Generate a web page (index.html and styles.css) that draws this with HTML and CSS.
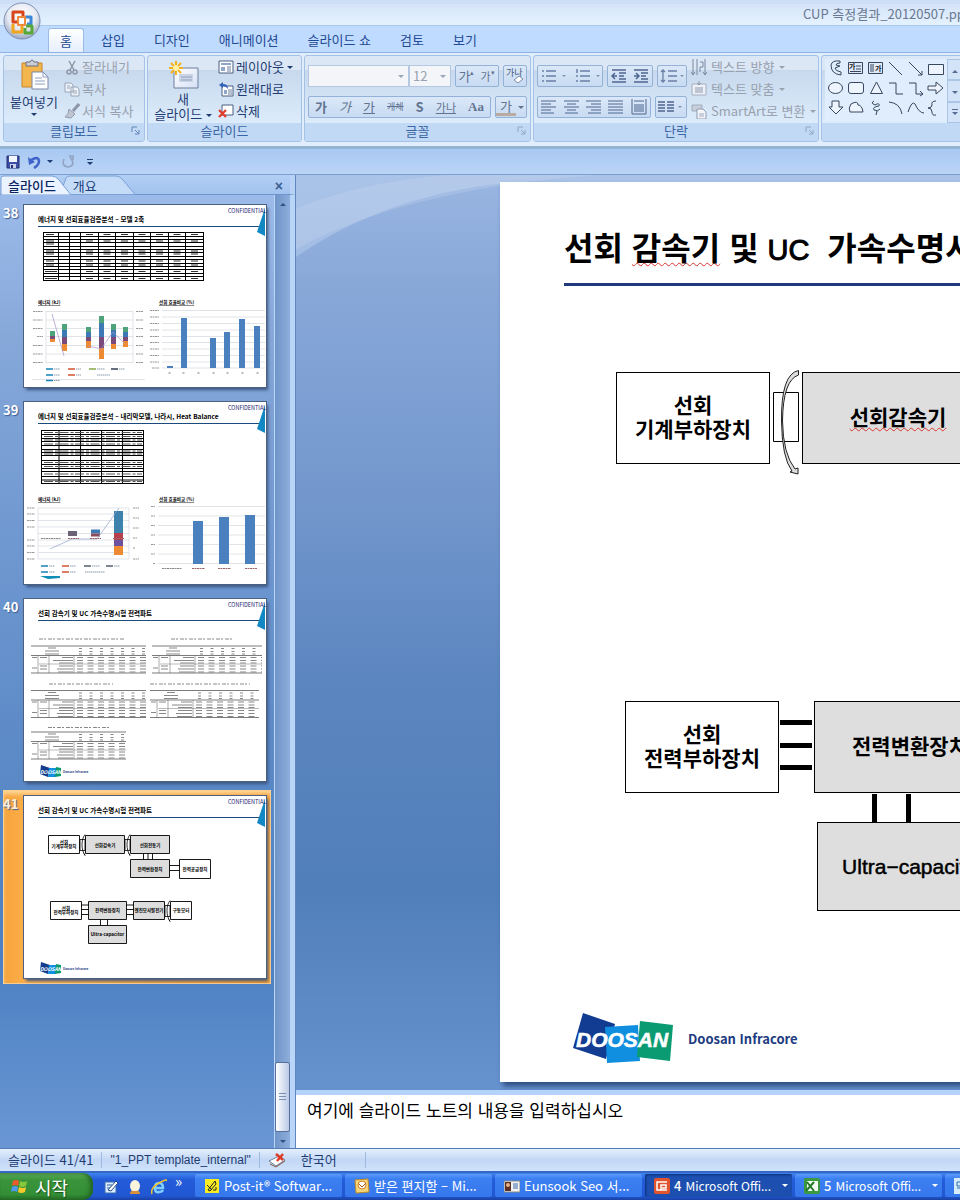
FILE: index.html
```html
<!DOCTYPE html>
<html lang="ko">
<head>
<meta charset="utf-8">
<title>CUP 측정결과_20120507.ppt</title>
<link rel="stylesheet" href="styles.css">
</head>
<body>
<svg class="defs" aria-hidden="true">
  <defs>
    <g id="slide-frame">
      <path d="M14 21.5H236" stroke="#1d4a7d" stroke-width="1.2"/>
      <path d="M241 3V31L233 27Z" fill="#1187c4"/>
      <text x="204" y="7.5" font-size="5.5" fill="#1c2470">CONFIDENTIAL</text>
    </g>
    <g id="mini-logo">
      <path d="M17 166l9 3-2 9-8-3z" fill="#143c8c"/><path d="M25 169h7v9h-8z" fill="#0f8fe0"/><path d="M32 168l5 1v8l-6 1z" fill="#0b9a6c"/>
      <text x="16" y="175" font-size="5" font-weight="700" font-style="italic" fill="#fff">DOOSAN</text>
      <text x="39" y="174" font-size="3" font-weight="700" fill="#1c3f83">Doosan Infracore</text>
    </g>
    <g id="data-table">
      <path d="M0 0H115M0 9.500H115M0 27H115" stroke="#444" stroke-width=".7"/>
      <path d="M7 9.500V27M18 9.500V27M43 9.500V27" stroke="#555" stroke-width=".5"/>
      <path d="M8 18H115" stroke="#777" stroke-width=".5"/>
      <g stroke="#888" stroke-width="1" fill="none">
        <path d="M17 2h8M14 5h14M14 8h14M1 11.500h5M9 11.500h7M1 22h5M9 20h7M9 23h7"/>
        <path d="M31 11.500h11M22 14.500h20M28 17h14M28 20h14M26 23h16M27 26h15"/>
        <path stroke-dasharray="6 4.500" d="M46 11.500h69M46 14.500h69M46 17h69M46 20h69M46 23h69M46 26h69"/>
        <path stroke-dasharray="3 7.500" d="M48 2.500h66M48 5.500h66M48 8h66"/>
      </g>
    </g>
    <g id="coupling"><path d="M0 4h5v11h-5zM5 -1C1 4 1 14 5 20M4 18l1 2" fill="none" stroke="#000" stroke-width=".8"/></g>
    <linearGradient id="paper" x1="0" y1="0" x2="1" y2="1"><stop offset="0" stop-color="#fff"/><stop offset="1" stop-color="#d5e0f4"/></linearGradient>
    <radialGradient id="orb" cx=".5" cy=".35" r=".65"><stop offset="0" stop-color="#fff"/><stop offset=".6" stop-color="#e6eaf2"/><stop offset="1" stop-color="#9aa8c4"/></radialGradient>
  </defs>
</svg>

<header class="titlebar">
  <h1 class="doc-title">CUP 측정결과_20120507.ppt</h1>
</header>

<nav class="tabs">
  <button class="office" aria-label="Office 단추">
    <svg viewBox="0 0 38 38">
      <circle cx="19" cy="19" r="18" fill="url(#orb)" stroke="#7d8fb3"/>
      <g fill="none" stroke-width="3" stroke-linejoin="round">
        <path d="M14 20H10V10h10v4" stroke="#d9451b"/>
        <path d="M22 15h6v7h-4" stroke="#3c86d8"/>
        <path d="M10 22v8h9v-6" stroke="#f0a51c"/>
        <path d="M23 24h6v7h-7v-5" stroke="#56a838"/>
        <path d="M15 15h7v8h-7z" stroke="#f08a3a" stroke-width="2"/>
      </g>
      <path d="M17 17h4v4h-4z" fill="#fff"/>
    </svg>
  </button>
  <button class="tab active">홈</button>
  <button class="tab">삽입</button>
  <button class="tab">디자인</button>
  <button class="tab">애니메이션</button>
  <button class="tab">슬라이드 쇼</button>
  <button class="tab">검토</button>
  <button class="tab">보기</button>
</nav>

<section class="ribbon">
  <div class="group g-clip">
    <div class="group-body">
      <button class="big">
        <svg width="32" height="32" viewBox="0 0 32 32"><path d="M4 4h20v24H4z" fill="#f3b64c" stroke="#c8862a"/><path d="M8 7V3h4q2-4 4 0h4v4z" fill="#c9cdd6" stroke="#6c6f7c"/><path d="M14 13h11l5 5v12H14z" fill="#fff" stroke="#7a87a8"/><path d="M25 13v5h5M17 19h7M17 22h10M17 25h10" fill="none" stroke="#8e9fc4"/></svg>
        <span>붙여넣기</span><i class="caret"></i>
      </button>
      <div class="stack">
        <button class="cmd off"><svg width="16" height="16" viewBox="0 0 16 16"><path d="M5 2l5 9M11 2L6 11" stroke="#8d97a8" stroke-width="1.500"/><circle cx="5" cy="13" r="2" fill="none" stroke="#8d97a8" stroke-width="1.500"/><circle cx="11" cy="13" r="2" fill="none" stroke="#8d97a8" stroke-width="1.500"/></svg>잘라내기</button>
        <button class="cmd off"><svg width="16" height="16" viewBox="0 0 16 16"><path d="M1 2h6l2 2v7H1zM7 6h6l2 2v7H7z" fill="#eef2f9" stroke="#9aa5b8"/><path d="M3 5h3M3 7h3M9 10h4M9 12h4" stroke="#9aa5b8"/></svg>복사</button>
        <button class="cmd off"><svg width="16" height="16" viewBox="0 0 16 16"><path d="M15 1L9 8" stroke="#8d97a8" stroke-width="3"/><path d="M5 6l6 5-4 4-6-1q4-3 4-8z" fill="#bfc6d2" stroke="#929cad"/></svg>서식 복사</button>
      </div>
    </div>
    <footer>클립보드<svg class="launch" viewBox="0 0 9 9"><path d="M1 6V1h5M4 4l4 4M8 4v4H4" fill="none" stroke="#6387b8"/></svg></footer>
  </div>

  <div class="group g-slide">
    <div class="group-body">
      <button class="big">
        <svg width="32" height="32" viewBox="0 0 32 32"><path d="M7 9h24v20H7z" fill="url(#paper)" stroke="#6e7f9d"/><path d="M12 15h14v8H12z" fill="#c9d4e6"/><path d="M14 18h11M14 21h11" stroke="#93a3bf"/><path d="M9 2v14M2 9h14M4 4l10 10M14 4L4 14" stroke="#f2b21b" stroke-width="2"/><circle cx="9" cy="9" r="3" fill="#fff2a8"/></svg>
        <span class="line">새</span>
        <span class="line">슬라이드 <i class="caret"></i></span>
      </button>
      <div class="stack">
        <button class="cmd"><svg width="16" height="16" viewBox="0 0 16 16"><path d="M1 2h14v12H1z" fill="#fff" stroke="#4d5f80"/><path d="M3 4h10v2H3zM3 8h4v4H3z" fill="#8fa5c9"/><path d="M9 8h4M9 10h4M9 12h4" stroke="#6c7f9f"/></svg>레이아웃 <i class="caret"></i></button>
        <button class="cmd"><svg width="16" height="16" viewBox="0 0 16 16"><path d="M4 5h11v10H4z" fill="#fff" stroke="#4d5f80"/><path d="M6 9h3v4H6z" fill="#8fa5c9"/><path d="M10 9h4M10 11h4M10 13h4" stroke="#6c7f9f"/><path d="M1 4l4-3v2q5 0 5 5Q8 5 5 5v2z" fill="#2f62b8"/></svg>원래대로</button>
        <button class="cmd"><svg width="16" height="16" viewBox="0 0 16 16"><path d="M4 2h11v10H4z" fill="#fff" stroke="#4d5f80"/><path d="M1 7l7 7M8 7l-7 7" stroke="#e23b2a" stroke-width="2.200"/></svg>삭제</button>
      </div>
    </div>
    <footer>슬라이드</footer>
  </div>

  <div class="group g-font">
    <div class="group-body rows">
      <div class="row">
        <div class="combos">
          <label class="combo wide"><select aria-label="글꼴"><option></option></select></label>
          <label class="combo"><select aria-label="글꼴 크기"><option>12</option></select></label>
        </div>
        <div class="btns grow"><button>가<sup>▴</sup></button><button class="small">가<sup>▾</sup></button></div>
        <div class="btns"><button aria-label="서식 지우기"><svg width="18" height="18" viewBox="0 0 18 18"><text x="0" y="9" font-size="9" fill="#44597f">가나</text><path d="M8 13l5-4 4 3-5 4z" fill="#fff" stroke="#7b8db0"/></svg></button></div>
      </div>
      <div class="row">
        <div class="btns fill"><button><b>가</b></button><button><i>가</i></button><button><u>가</u></button><button class="tiny"><s>개체</s></button><button><b>S</b></button><button class="small"><u>가나</u></button><button class="serif">Aa</button></div>
        <div class="btns"><button class="fontcolor">가</button><button aria-label="글꼴 색 목록"><i class="caret"></i></button></div>
      </div>
    </div>
    <footer>글꼴<svg class="launch" viewBox="0 0 9 9"><path d="M1 6V1h5M4 4l4 4M8 4v4H4" fill="none" stroke="#8ea6c8"/></svg></footer>
  </div>

  <div class="group g-para">
    <div class="group-body">
      <div class="rows">
        <div class="row">
          <div class="btns wide-btns"><button aria-label="글머리 기호"><svg width="28" height="16" viewBox="0 0 28 16"><path d="M2 3h2M2 8h2M2 13h2M6 3h10M6 8h10M6 13h10" stroke="#6a7fa5" stroke-width="1.500"/><path d="M22 7h4l-2 2z" fill="#7e90b0"/></svg></button><button aria-label="번호 매기기"><svg width="28" height="16" viewBox="0 0 28 16"><path d="M5 1v4M4 8h2M4 13h2M8 3h10M8 8h10M8 13h10" stroke="#6a7fa5" stroke-width="1.500"/><path d="M24 7h4l-2 2z" fill="#7e90b0"/></svg></button></div>
          <div class="btns"><button aria-label="내어쓰기"><svg width="18" height="16" viewBox="0 0 16 16"><path d="M1 2h14M8 5h7M8 8h5M8 11h7M1 14h14M6 8H1M4 5L1 8l3 3" fill="none" stroke="#4f668f" stroke-width="1.500"/></svg></button><button aria-label="들여쓰기"><svg width="18" height="16" viewBox="0 0 16 16"><path d="M1 2h14M8 5h7M8 8h5M8 11h7M1 14h14M1 8h5M3 5l3 3-3 3" fill="none" stroke="#4f668f" stroke-width="1.500"/></svg></button></div>
          <div class="btns"><button aria-label="줄 간격"><svg width="24" height="16" viewBox="0 0 24 16"><path d="M3 2v12M1 4l2-2 2 2M1 12l2 2 2-2M8 3h9M8 8h9M8 13h9" fill="none" stroke="#6a7fa5" stroke-width="1.300"/><path d="M20 7h4l-2 2z" fill="#7e90b0"/></svg></button></div>
        </div>
        <div class="row">
          <div class="btns fill"><button aria-label="왼쪽 맞춤"><svg width="16" height="14" viewBox="0 0 16 14"><path d="M0 1h15M0 4h10M0 7h15M0 10h10M0 13h13" stroke="#4f668f"/></svg></button><button aria-label="가운데 맞춤"><svg width="16" height="14" viewBox="0 0 16 14"><path d="M0 1h15M3 4h9M0 7h15M3 10h9M1 13h13" stroke="#4f668f"/></svg></button><button aria-label="오른쪽 맞춤"><svg width="16" height="14" viewBox="0 0 16 14"><path d="M0 1h15M5 4h10M0 7h15M5 10h10M2 13h13" stroke="#4f668f"/></svg></button><button aria-label="양쪽 맞춤"><svg width="16" height="14" viewBox="0 0 16 14"><path d="M0 1h15M0 4h15M0 7h15M0 10h15M0 13h15" stroke="#4f668f"/></svg></button><button aria-label="균등 분할"><svg width="16" height="16" viewBox="0 0 16 16"><path d="M1 0v15h14V0M3 2h10M3 6h10M3 8h10M3 10h10M3 12h10" fill="none" stroke="#4f668f"/></svg></button></div>
          <div class="btns"><button aria-label="열"><svg width="26" height="14" viewBox="0 0 26 14"><path d="M0 2h7M0 5h7M0 8h7M0 11h7M9 2h7M9 5h7M9 8h7M9 11h7" stroke="#4f668f" stroke-width="1.500"/><path d="M20 6h4l-2 2z" fill="#7e90b0"/></svg></button></div>
        </div>
      </div>
      <div class="stack">
        <button class="cmd off"><svg width="16" height="16" viewBox="0 0 16 16"><path d="M2 0v16M6 0v16M14 0v16M0 13l2 3 2-3M12 13l2 3 2-3M9 3h3v5h-3M9 8v5" fill="none" stroke="#7988a3"/></svg>텍스트 방향 <i class="caret"></i></button>
        <button class="cmd off"><svg width="16" height="16" viewBox="0 0 16 16"><path d="M1 3h14v11H1z" fill="#edf1f7" stroke="#a3aebf"/><path d="M8 0v4M6 2l2 2 2-2M4 7h8M4 9h8M4 11h8" stroke="#8d99ad" fill="none"/></svg>텍스트 맞춤 <i class="caret"></i></button>
        <button class="cmd off"><svg width="16" height="16" viewBox="0 0 16 16"><path d="M1 2h10v6H1z" fill="#c8cfdb" stroke="#a0abbd"/><path d="M6 6h6l3 3v7H6z" fill="#f3f5f9" stroke="#8f9bb0"/><path d="M8 11h5M8 13h5" stroke="#a0abbd"/></svg>SmartArt로 변환 <i class="caret"></i></button>
      </div>
    </div>
    <footer>단락<svg class="launch" viewBox="0 0 9 9"><path d="M1 6V1h5M4 4l4 4M8 4v4H4" fill="none" stroke="#8ea6c8"/></svg></footer>
  </div>

  <div class="group g-draw">
    <div class="group-body">
      <div class="gallery">
        <svg width="122" height="62" viewBox="0 0 122 62" fill="none" stroke="#38465f">
          <path d="M15 2Q7 1 6 6q0 9 10 10v-3q-6-1-6-4l5-2-4-1q0-2 4-2z"/>
          <path d="M23.500 3.500h14v11h-14zM43.500 3.500h14v11h-14z" fill="#dfe9f8"/><path d="M31 7h5M31 10h5M25 12.500h11M46 5v8M48 5v8"/>
          <text x="24" y="10" font-size="7" font-weight="700" fill="#222" stroke="none">가</text><text x="50" y="12" font-size="7" font-weight="700" fill="#222" stroke="none">가</text>
          <path d="M64 3l13 13M84 3l13 13M97 12v4h-4"/><path d="M103.500 5.500h15v10h-15z" fill="#eef4fd"/>
          <ellipse cx="10.500" cy="29" rx="7" ry="5.500" fill="#eef4fd"/><rect x="23.500" y="23.500" width="15" height="11" rx="2.500" fill="#eef4fd"/><path d="M51.500 23l6 11.500h-12z" fill="#eef4fd"/>
          <path d="M64 24h7v11h7M84 24h7v11h7M95 32l3 3-3 2"/><path d="M103 27h8v-4l7 6-7 6v-4h-8z" fill="#eef4fd"/>
          <path d="M7 42h7v6h4l-7 7-7-7h3z" fill="#eef4fd"/><path d="M26 45q7-4 7 1 4 0 5 7H25q-2-4 1-8z" fill="#eef4fd"/>
          <path d="M49 42q-4 2 1 4 5-3 4 1-7 1-5 4 4 2 6-1M52 52l-1 4M64 43q11 1 13 12M83 53q4-12 7-8 4 9 9 9M111 42q-5 0-4 4 0 3-4 3 4 0 4 4 0 4 4 3"/>
        </svg>
        <div class="spin"><button aria-label="이전"><i class="caret up"></i></button><button aria-label="다음"><i class="caret"></i></button><button aria-label="자세히"><i class="caret more"></i></button></div>
      </div>
    </div>
    <footer></footer>
  </div>
</section>

<div class="qat">
  <button aria-label="저장"><svg width="14" height="14" viewBox="0 0 14 14"><path d="M1 1h12v12H1z" fill="#3c4fa5" stroke="#252f70"/><path d="M3 1h8v6H3z" fill="#f2f6ff"/><path d="M4 9h6v4H4z" fill="#c9d2ea"/><path d="M5 10h2v3H5z" fill="#252f70"/></svg></button>
  <button aria-label="실행 취소" class="undo"><svg width="14" height="14" viewBox="0 0 14 14"><path d="M2 6q8-6 9 0 0 4-5 7" fill="none" stroke="#3f63c8" stroke-width="2.500"/><path d="M0 2l1 8 6-3z" fill="#3f63c8"/></svg><i class="caret"></i></button>
  <button aria-label="다시 실행" class="redo"><svg width="14" height="14" viewBox="0 0 14 14"><path d="M3 4q-3 7 4 8 7-1 4-7l-2-3M8 1h4v4" fill="none" stroke="#92a5c4" stroke-width="1.700"/></svg></button>
  <button aria-label="사용자 지정" class="more-btn"><i class="caret more"></i></button>
</div>

<main class="work">
  <aside class="outline">
    <div class="pane-tabs">
      <svg class="tab-shape" viewBox="0 0 136 20" aria-hidden="true"><path d="M60 19.500L66 3q1-2 4-2h46q4 0 7 4l12 14.500z" fill="#c5dcf8" stroke="#7ba0d4"/><path d="M1 20V3q0-2 3-2h48q4 0 7 4l12 15z" fill="#eaf3ff" stroke="#7ba0d4"/></svg>
      <button class="pane-tab active">슬라이드</button><button class="pane-tab">개요</button><button class="close" aria-label="닫기">×</button>
    </div>
    <div class="list-wrap">
      <ol class="thumbs">
        <li><span class="num">38</span>
          <svg class="thumb" viewBox="0 0 242 182">
            <use href="#slide-frame"/>
            <text x="14" y="17" font-size="6.500" font-weight="700">에너지 및 선회효율검증분석 – 모델 2축</text>
            <path d="M19.500 27.500v48M34.500 27.500v48M45.500 27.500v48M56.500 27.500v48M74.500 27.500v48M91.500 27.500v48M109.500 27.500v48M126.500 27.500v48M144.500 27.500v48M161.500 27.500v48M179.500 27.500v48M19 27.500h161M19 31.500h161M19 34.500h161M19 37.500h161M19 41.500h161M19 44.500h161M19 47.500h161M19 51.500h161M19 54.500h161M19 58.500h161M19 61.500h161M19 64.500h161M19 68.500h161M19 71.500h161M19 75.500h161" stroke="#000"/>
            <path d="M22 29.500h8M22 36h8M22 39h8M22 46h8M22 49h8M22 56h8M22 60h8M21 66.500h12M21 73.500h12" stroke="#333"/>
            <path d="M62 29.500h113M62 36h113M62 46h113M62 49h113M62 56h113M62 60h113M62 66.500h113M62 73.500h113" stroke="#333" stroke-dasharray="7 10.500"/>
            <text x="14" y="99" font-size="4.500" font-weight="700" text-decoration="underline">에너지 (kJ)</text><text x="135" y="99" font-size="4.500" font-weight="700" text-decoration="underline">선회 효율비교 (%)</text>
            <path d="M22 106.500h87M22 115h87M22 123.500h87M22 131.500h87M22 140.500h87M22 149h87M22 157.500h87M22 106v52M109 106v52M138 105.500h103M138 112h103M138 118.500h103M138 125h103M138 131.500h103M138 137.500h103M138 144h103M138 150.500h103M138 157h103M138 163h103M8 174.500h113" stroke="#d3d8df" stroke-width=".7"/>
            <path d="M9 106.500h10M9 115h10M9 123.500h10M13 131.500h6M9 140.500h10M9 149h10M9 157.500h10M112 106.500h7M112 115h7M112 123.500h7M112 131.500h7M112 140.500h7M112 149h7M112 157.500h7M126 105.500h9M126 112h9M126 118.500h9M126 125h9M126 131.500h9M126 137.500h9M126 144h9M126 150.500h9M126 157h9M128 163h7" stroke="#999" stroke-dasharray="2 .5"/>
            <path d="M26 126h5v5h-5zM38 119h5v6h-5zM62 122h5v5h-5zM75 111h5v7h-5zM87 119h5v6h-5zM99 122h5v5h-5z" fill="#4fa37b"/>
            <path d="M38 125h5v7h-5zM62 127h5v5h-5zM75 118h5v14h-5zM87 125h5v7h-5zM99 127h5v5h-5z" fill="#3d7ab5"/>
            <path d="M26 131h5v3h-5zM38 132h5v7h-5zM62 132h5v4h-5zM75 132h5v11h-5zM87 132h5v7h-5zM99 132h5v4h-5z" fill="#7a4a7a"/>
            <path d="M26 134h5v3h-5zM38 139h5v7h-5zM62 136h5v7h-5zM75 143h5v11h-5zM87 139h5v5h-5zM99 136h5v6h-5z" fill="#ee8b32"/>
            <path d="M28 109l12 42M64 141l13 3 12-17 12 12" fill="none" stroke="#a88fc8" stroke-width=".7"/>
            <path d="M143 161h6v2h-6zM157 113h6v50h-6zM186 133h6v30h-6zM200 127h6v36h-6zM215 114h6v49h-6zM230 121h6v42h-6z" fill="#4a80bd"/>
            <path d="M144.500 168h2M158.500 168h2M173.500 168h2M188.500 168h2M202.500 168h2M217.500 168h2M232.500 168h2" stroke="#777"/>
            <path d="M22 164h7M22 170h7M22 175.500h7" stroke="#1683b8" stroke-width="1.500"/><path d="M44 164h7M44 170h7" stroke="#d25332" stroke-width="1.500"/><path d="M65 164h7" stroke="#86a744" stroke-width="1.500"/><path d="M87 164h7" stroke="#333f55" stroke-width="1.500"/>
            <path d="M30 164h6M52 164h5M73 164h8M95 164h6M30 170h6M52 170h5M73 170h13M30 175.500h6" stroke="#8a9aab" stroke-dasharray="1.500 .5"/>
          </svg></li>
        <li><span class="num">39</span>
          <svg class="thumb" viewBox="0 0 242 182">
            <use href="#slide-frame"/>
            <text x="14" y="17" font-size="6.500" font-weight="700">에너지 및 선회효율검증분석 – 내리막모델, 나라시, Heat Balance</text>
            <path d="M17.500 28.500v53M35 28.500v53M56.500 28.500v53M77.500 28.500v53M98.500 28.500v53M119.500 28.500v53M17 28.500h103M17 32.500h103M17 36.500h103M17 39.500h103M17 43.500h103M17 47.500h103M17 50.500h103M17 53.500h103M17 58.500h103M17 62.500h103M17 66.500h103M17 69.500h103M17 74.500h103M17 78h103M17 81.500h103" stroke="#000"/>
            <path d="M20 30.500h98M20 34.500h98M20 38h98M20 42h98M20 49h98M20 52h98M20 60.500h98M20 64.500h98M20 72h98M20 79.500h98" stroke="#555" stroke-dasharray="9 2 3 1.500"/>
            <text x="14" y="99" font-size="4.500" font-weight="700" text-decoration="underline">에너지 (kJ)</text><text x="135" y="99" font-size="4.500" font-weight="700" text-decoration="underline">선회 효율비교 (%)</text>
            <path d="M14 106h91M14 112h91M14 118.500h91M14 125h91M14 131.500h91M14 138h91M14 144h91M14 150.500h91M14 157h91M14 106v51M105 106v51M134 104.500h107M134 114h107M134 123.500h107M134 133h107M134 142.500h107M134 152h107M134 161.500h107" stroke="#d3d8df" stroke-width=".7"/>
            <path d="M3 106h8M3 112h8M3 118.500h8M3 125h8M3 138h8M3 144h8M3 150.500h8M3 157h8M109 106h6M109 116h6M109 126h6M109 136h4M109 146h2M109 157h6M127 104.500h4M127 114h4M127 123.500h4M127 133h4M127 142.500h4M127 152h4M129 161.500h2" stroke="#999" stroke-dasharray="2 .5"/>
            <path d="M44 129h9v5h-9z" fill="#6c6377"/><path d="M67 127.500h9v4h-9z" fill="#3d7ab5"/><path d="M67 131.500h9v3h-9z" fill="#8d4c5d"/>
            <path d="M90 109h9v22h-9z" fill="#3d82ad"/><path d="M90 131h9v7h-9z" fill="#b8404d"/><path d="M90 138h9v6h-9z" fill="#6b51a0"/><path d="M90 144h9v9h-9z" fill="#ee8b32"/>
            <path d="M26 147l22-10h25l22-31" fill="none" stroke="#8fa2cb" stroke-width=".7"/>
            <path d="M17 136.500h20M138 166.500h20" stroke="#888" stroke-dasharray="2 .5"/>
            <path d="M44 136.500h11M66 136.500h11M89 136.500h11M168 166.500h13M194 166.500h13M221 166.500h12" stroke="#a0666b" stroke-dasharray="2 .5"/>
            <path d="M169 119h10v43h-10zM195 115h10v47h-10zM221 113h10v49h-10z" fill="#4a80bd"/>
            <path d="M17 164h7M17 170h7" stroke="#1683b8" stroke-width="1.500"/><path d="M38 164h7M38 170h7" stroke="#d25332" stroke-width="1.500"/><path d="M60 164h7M82 164h7" stroke="#555f70" stroke-width="1.500"/>
            <path d="M25 164h6M46 164h6M68 164h8M90 164h6M25 170h6M46 170h6M61 170h20" stroke="#8a9aab" stroke-dasharray="1.500 .5"/>
            <path d="M16 174h20v2l-12 1z" fill="#0f8fb8"/>
          </svg></li>
        <li><span class="num">40</span>
          <svg class="thumb" viewBox="0 0 242 182">
            <use href="#slide-frame"/>
            <text x="14" y="17" font-size="6.500" font-weight="700">선회 감속기 및 UC 가속수명시험 전력파트</text>
            <path d="M15 40h86M147 40h61M25 85h64M126 85h100M24 128.500h61" stroke="#888" stroke-dasharray="4 1 2 2"/>
            <use href="#data-table" x="7" y="47"/>
            <svg x="128" y="46" width="110" height="30"><use href="#data-table" y="1"/></svg>
            <use href="#data-table" x="7" y="91.500"/>
            <svg x="126" y="90" width="109" height="30"><use href="#data-table" y="1.500"/></svg>
            <svg x="7" y="132" width="95" height="30"><use href="#data-table" y="1"/></svg>
            <use href="#mini-logo"/>
          </svg></li>
        <li class="selected"><span class="num">41</span>
          <svg class="thumb" viewBox="0 0 242 182">
            <use href="#slide-frame"/>
            <text x="14" y="17" font-size="6.500" font-weight="700">선회 감속기 및 UC 가속수명시험 전력파트</text>
            <g stroke="#000" stroke-width=".9" fill="#fff">
              <path d="M24.500 39.500h31v18h-31zM155.500 63.500h31v19h-31zM26.500 105.500h31v18h-31zM146.500 105.500h21v18h-21z"/>
              <path d="M61.500 39.500h39v18h-39zM106.500 39.500h39v18h-39zM106.500 63.500h39v18h-39zM64.500 105.500h38v18h-38zM109.500 105.500h31v18h-31zM64.500 129.500h38v18h-38z" fill="#ddd"/>
              <path d="M119.500 57.500v6M124 57.500v6M128.500 57.500v6M145.500 69.500h10M145.500 74.500h10M57.500 109h7M57.500 113.500h7M57.500 118.500h7M102.500 109h7M102.500 113.500h7M102.500 118.500h7M76.500 123.500v6M83.500 123.500v6"/>
            </g>
            <use href="#coupling" x="56" y="39.500"/><use href="#coupling" x="101" y="39.500"/><use href="#coupling" x="141" y="105.500"/>
            <g font-size="4.500" font-weight="700" text-anchor="middle">
              <text x="40" y="47.500">선회</text><text x="40" y="52">기계부하장치</text><text x="81" y="50.500">선회감속기</text><text x="126" y="50.500">선회전동기</text><text x="126" y="74.500">전력변환장치</text><text x="171" y="74.500">전력공급장치</text>
              <text x="42" y="113.500">선회</text><text x="42" y="118">전력부하장치</text><text x="83.500" y="116">전력변환장치</text><text x="125" y="116">엔진모사발전기</text><text x="157" y="116">구동모터</text><text x="83.500" y="139.500">Ultra-capacitor</text>
            </g>
            <use href="#mini-logo"/>
          </svg></li>
      </ol>
      <div class="scroll"><button aria-label="위로"><i class="caret up"></i></button><div class="track"><div class="handle"></div></div><button aria-label="아래로"><i class="caret"></i></button></div>
    </div>
  </aside>

  <section class="editor">
    <div class="stage">
      <svg class="swoosh" viewBox="0 0 664 240" preserveAspectRatio="none" aria-hidden="true"><path d="M0 0H664V8H210Q90 20 0 82Z" fill="#c3d6f3" opacity=".4"/><path d="M0 34Q60 8 150 0H300Q110 14 0 74Z" fill="#fff" opacity=".12"/></svg>
      <article class="slide">
        <h2>선회 <span class="sp">감속기</span> 및 <span class="latin">UC</span>&nbsp; 가속수명시험</h2>
        <div class="canvas">
          <div class="node n1">선회<br>기계부하장치</div>
          <svg class="link l1" width="28" height="106" viewBox="0 0 28 106"><path d="M1.500 22.500h25v49h-25z" fill="none" stroke="#000"/><path d="M26.500 .500Q9 4 9.500 51 10 88 20 101l-2 1 8 2v-6l-3 1Q11 84 10.500 51 11 10 26.500 5z" fill="#ddd" stroke="#222"/></svg>
          <div class="node grey n2"><span class="sp">선회감속기</span></div>
          <div class="node n3">선회<br>전력부하장치</div>
          <svg class="link l2" width="34" height="52" viewBox="0 0 34 52"><path d="M1 2.500h32M1 25.500h32M1 47.500h32" stroke="#000" stroke-width="5"/></svg>
          <div class="node grey n4">전력변환장치</div>
          <svg class="link l3" width="40" height="28" viewBox="0 0 40 28"><path d="M2.500 0v28M36.500 0v28" stroke="#000" stroke-width="5"/></svg>
          <div class="node grey n5"><span class="latin">Ultra−capacitor</span></div>
        </div>
        <div class="brand">
          <svg width="101" height="51" viewBox="0 0 101 51"><path d="M10 0l32 11-9 35-33-11z" fill="#123c92"/><path d="M32 14l33-2 2 36-33 2z" fill="#108fe0"/><path d="M67 8l33 4-3 36-33-4z" fill="#0b9b72"/><text x="3" y="34" font-family="Liberation Sans, sans-serif" font-size="21" font-weight="700" font-style="italic" fill="#fff" stroke="#fff" stroke-width=".5">DOOSAN</text></svg>
          <span>Doosan Infracore</span>
        </div>
      </article>
    </div>
    <div class="notes">여기에 슬라이드 노트의 내용을 입력하십시오</div>
  </section>
</main>

<footer class="status">
  <span>슬라이드 41/41</span><span class="template">"1_PPT template_internal"</span>
  <span class="lang"><svg width="18" height="16" viewBox="0 0 18 16"><path d="M1 9l7 5 9-6-6-4z" fill="#fff" stroke="#6c7d9b"/><path d="M2 12l6 3 9-6" fill="none" stroke="#8a5c42"/><path d="M8 2l7 6M15 2L9 9" stroke="#df3a26" stroke-width="2.500"/></svg>한국어</span>
</footer>

<div class="taskbar">
  <button class="start"><svg width="18" height="18" viewBox="0 0 18 18"><path d="M2 3q3-2 6 0L7 8Q4 6 1 8z" fill="#ed5a2b"/><path d="M9 3q4 2 7 0l-1 5q-4 2-7 0z" fill="#84c83b"/><path d="M1 9q3-2 6 0l-1 5q-3-2-6 0z" fill="#4d9af0"/><path d="M8 9q4 2 7 0l-1 5q-4 2-7 0z" fill="#f7c928"/></svg>시작</button>
  <div class="quick">
    <button aria-label="바탕 화면 보기"><svg width="16" height="16" viewBox="0 0 16 16"><path d="M2 3h11v11H2z" fill="#dcebff" stroke="#3d6fae"/><path d="M5 11l8-9 2 2-7 8z" fill="#fff" stroke="#224b88"/><path d="M4 6h5M4 9h3" stroke="#345f9d"/></svg></button>
    <button aria-label="사용자"><svg width="16" height="16" viewBox="0 0 16 16"><ellipse cx="8" cy="7" rx="5" ry="6" fill="#fbf4dd"/><path d="M3 15q0-4 5-3 5-1 5 3z" fill="#d98f3c"/></svg></button>
    <button aria-label="Internet Explorer"><svg width="16" height="16" viewBox="0 0 16 16"><path d="M3 9h9q0-5-4-5T4 9t4 4q3 0 4-2" fill="none" stroke="#7fd0ff" stroke-width="2.500"/><path d="M1 15Q-1 9 8 4t7-2" fill="none" stroke="#f2c230" stroke-width="1.500"/></svg></button>
    <span class="chev">»</span>
  </div>
  <button class="task"><svg width="16" height="16" viewBox="0 0 16 16"><path d="M1 1h14v14H1z" fill="#f9ec22"/><path d="M4 12l7-9 1 3-6 7zM3 7l5 5M9 12h3V9" stroke="#222" fill="none"/></svg><span>Post-it® Softwar...</span></button>
  <button class="task"><svg width="16" height="16" viewBox="0 0 16 16"><path d="M1 2l13-1 1 13-13 1z" fill="#f7d57a" stroke="#c48c22"/><circle cx="8" cy="7" r="4" fill="#fff" stroke="#d17f1b"/><path d="M5 6l3 3 4-4" stroke="#b35b13" fill="none"/></svg><span>받은 편지함 – Mi...</span></button>
  <button class="task"><svg width="16" height="16" viewBox="0 0 16 16"><path d="M0 3h16v11H0z" fill="#f3f3ef" stroke="#888"/><path d="M1 4h6v9H1z" fill="#5b2f25"/><circle cx="4" cy="7" r="2" fill="#e5b184"/><path d="M9 6h5M9 8h5M9 10h5" stroke="#3d66b5"/></svg><span>Eunsook Seo 서...</span></button>
  <button class="task active"><svg width="16" height="16" viewBox="0 0 16 16"><rect width="16" height="16" rx="2" fill="#e1542d"/><path d="M13 4H3v8h10" fill="none" stroke="#fff" stroke-width="1.500"/><path d="M7 12V7h5v3H8" fill="none" stroke="#fff" stroke-width="1.500"/></svg><b>4</b><span>Microsoft Offi...</span><i class="caret"></i></button>
  <button class="task"><svg width="16" height="16" viewBox="0 0 16 16"><rect width="16" height="16" rx="2" fill="#3b9a3f"/><path d="M3 3h11v10H3z" fill="#f4fbf2"/><path d="M3 4l7 9M10 4l-8 9" stroke="#237a2a" stroke-width="2"/></svg><b>5</b><span>Microsoft Offi...</span><i class="caret"></i></button>
  <button class="task" aria-label="문서"><svg width="16" height="16" viewBox="0 0 16 16"><rect width="16" height="16" fill="#d7ecf9"/><path d="M3 4h6v4H3zM3 10h8" stroke="#2c6fb0" fill="none"/></svg></button>
</div>
</body>
</html>
```
FILE: styles.css
```css
* { box-sizing: border-box; }
html, body { height: 100%; }
body {
  margin: 0;
  display: flex;
  flex-direction: column;
  min-height: 100vh;
  overflow: hidden;
  background: #bfdbff;
  color: #1e3c72;
  font: 13px/16px "Noto Sans CJK KR", "Noto Sans", sans-serif;
}
button {
  margin: 0;
  padding: 0;
  border: 0;
  background: none;
  color: inherit;
  font: inherit;
  white-space: nowrap;
}
svg { flex: none; }
.defs { position: absolute; width: 0; height: 0; }

.caret {
  display: inline-block;
  flex: none;
  width: 0;
  height: 0;
  border: 3px solid transparent;
  border-top-color: currentColor;
  border-bottom: 0;
  vertical-align: middle;
}
.caret.up { border: 3px solid transparent; border-bottom-color: currentColor; border-top: 0; }
.caret.more { position: relative; }
.caret.more::before { content: ""; position: absolute; left: -3px; top: -6px; width: 6px; height: 1px; background: currentColor; }

/* Title and tabs */
.titlebar {
  flex: none;
  display: flex;
  justify-content: flex-end;
  height: 26px;
  padding: 5px 0 0;
  border-top: 4px solid #cddff6;
  border-bottom: 1px solid #a8c8ec;
  background: linear-gradient(#d5e4f9, #e4f2ff);
  overflow: hidden;
}
.doc-title {
  flex: 0 0 157px;
  min-width: 0;
  margin: 0;
  font-size: 13px;
  line-height: 10px;
  font-weight: 400;
  color: #6a7890;
  white-space: nowrap;
}
.tabs {
  flex: none;
  display: flex;
  align-items: flex-end;
  height: 26px;
  padding-left: 48px;
  position: relative;
  background: #bfdbff;
}
.office { position: absolute; left: 3px; top: -24px; width: 38px; height: 38px; }
.tab {
  height: 24px;
  padding: 0 11px;
  margin-right: 7px;
  color: #1f4a94;
}
.tab.active {
  margin-right: 6px;
  border: 1px solid #9abce6;
  border-bottom: 0;
  border-radius: 3px 3px 0 0;
  background: linear-gradient(#fff, #e6effb);
}

/* Ribbon */
.ribbon {
  flex: none;
  display: flex;
  gap: 2px;
  height: 97px;
  padding: 2px 3px 4px;
  border-top: 1px solid #8db2e3;
  border-bottom: 3px solid #93b5d3;
  background: #e0edfc;
  overflow: hidden;
}
.group {
  flex: none;
  display: flex;
  flex-direction: column;
  border: 1px solid #a4c2e4;
  border-radius: 3px;
  background: linear-gradient(#dce7f6 0, #dce7f6 16%, #c8d9ee 17%, #dcecfb 80%);
  overflow: hidden;
}
.g-clip { width: 142px; }
.g-slide { width: 155px; }
.g-font { width: 227px; }
.g-para { width: 286px; }
.g-draw { width: 480px; }
.group-body { flex: 1; display: flex; padding: 0 3px; }
.group footer {
  flex: none;
  position: relative;
  height: 18px;
  background: #c1d9f4;
  color: #3b66a4;
  text-align: center;
}
.group:not(.g-clip) footer { padding-right: 0; }
.launch { position: absolute; right: 4px; top: 3px; width: 9px; height: 9px; }
.big {
  display: flex;
  flex-direction: column;
  align-items: center;
  padding-top: 3px;
}
.big span { line-height: 16px; }
.big > .caret { margin-top: 3px; }
.g-clip .big { width: 54px; }
.g-clip .big span { margin-top: 3px; }
.g-slide .big { width: 64px; }
.big .line { line-height: 15px; }
.stack { display: flex; flex-direction: column; align-items: flex-start; }
.cmd { display: flex; align-items: center; gap: 2px; height: 22px; padding-left: 3px; }
.cmd .caret { margin-left: 1px; }
.off { color: #98a1ae; }
.rows { display: flex; flex-direction: column; gap: 9px; padding: 9px 3px 0; }
.group-body .rows { padding: 9px 0 0; }
.row { display: flex; gap: 4px; height: 22px; }
.combos { display: flex; flex: 1; }
.combo { position: relative; display: flex; width: 42px; }
.combo.wide { flex: 1; }
.combo select {
  appearance: none;
  width: 100%;
  padding: 0 0 0 3px;
  border: 1px solid #b4c8e2;
  border-radius: 0;
  background: #f3f5f8;
  color: #97a1af;
  font: inherit;
}
.combo::after {
  content: "";
  position: absolute;
  right: 5px;
  top: 10px;
  border: 3px solid transparent;
  border-top-color: #9aa6b8;
  border-bottom: 0;
}
.btns {
  display: flex;
  align-items: center;
  border: 1px solid #94b2d8;
  border-radius: 2px;
  background: linear-gradient(#dbe8f8, #c8dbf2);
  color: #627491;
}
.btns button { display: flex; align-items: center; justify-content: center; padding: 0 2px; }
.btns.grow button { width: 21px; }
.btns.fill { flex: 1; justify-content: space-around; }
.btns sup { font-size: 7px; line-height: 8px; align-self: flex-start; }
.btns .small { font-size: 11px; }
.btns .tiny { font-size: 9px; }
.btns .serif { font-family: "Liberation Serif", serif; font-weight: 700; }
.btns .fontcolor { width: 20px; height: 17px; border-bottom: 3px solid #b9aba0; line-height: 14px; }
.g-para .cmd { gap: 4px; padding-left: 4px; }
.g-para .rows { width: 151px; }
.g-para .wide-btns { flex: 1; }
.gallery { display: flex; padding-top: 3px; }
.gallery svg { background: #dfedfc; }
.spin { display: flex; flex-direction: column; width: 16px; color: #566d93; }
.spin button { flex: 1; border: 1px solid #aac5e6; background: #d4e4f8; }

/* Quick access toolbar */
.qat {
  flex: none;
  display: flex;
  align-items: center;
  gap: 8px;
  height: 26px;
  padding: 0 6px;
  border-bottom: 1px solid #7c9fcf;
  background: linear-gradient(#a9c9f2, #bad4f6);
}
.qat button { display: flex; align-items: center; gap: 5px; }
.more-btn { padding: 3px 0 0 4px; }

/* Work area */
.work { flex: 1; display: flex; min-height: 0; }
.outline { flex: none; display: flex; flex-direction: column; width: 296px; border-right: 1px solid #5f87bf; }
.pane-tabs {
  flex: none;
  display: flex;
  position: relative;
  height: 20px;
  padding: 2px 7px 0 8px;
  border-bottom: 1px solid #6d95cd;
  border-right: 5px solid #b7d2f5;
  background: linear-gradient(#b2cff5, #a2c2ee);
}
.tab-shape { position: absolute; left: 0; top: 0; width: 136px; height: 20px; }
.pane-tab { position: relative; margin-right: 17px; color: #173a78; }
.pane-tab.active { font-weight: 500; color: #0b2560; }
.close { margin-left: auto; font: 700 14px/16px "Liberation Sans", sans-serif; color: #3c5f95; }
.list-wrap {
  flex: 1;
  display: flex;
  min-height: 0;
  background: linear-gradient(#9cbbea 0, #86a8d9 15%, #7199d1 35%, #5f8cc8 55%, #4c80c2 80%, #6a96d4 100%);
}
.thumbs {
  flex: 1;
  display: flex;
  flex-direction: column;
  gap: 3px;
  min-width: 0;
  margin: 0;
  padding: 4px 3px 0;
  list-style: none;
}
.thumbs li { flex: none; display: flex; height: 194px; padding-top: 6px; }
.num { flex: none; width: 21px; color: #fff; font-weight: 700; line-height: 16px; text-shadow: 1px 1px 1px #3a5f96; }
.thumb { width: 242px; height: 182px; background: #fff; outline: 1px solid #4c6080; box-shadow: 2px 3px 3px #3a5580; overflow: hidden; }
.selected { background: linear-gradient(90deg, #f5a33c, #ffb04c 10%, #f39a2e); box-shadow: inset 0 0 0 1px #ffcf8e, inset 0 4px 4px #ffd79a; }
.selected .num { color: #fff1d8; }
.scroll {
  flex: none;
  display: flex;
  flex-direction: column;
  width: 21px;
  border-left: 1px solid #bcd6f7;
  border-right: 5px solid #b9d5f8;
  background: linear-gradient(90deg, #6f94c8, #8eaedb);
  color: #31517f;
}
.scroll button { flex: none; height: 16px; }
.track { flex: 1; display: flex; flex-direction: column; justify-content: flex-end; }
.handle {
  flex: none;
  height: 70px;
  border: 1px solid #566f9c;
  border-radius: 2px;
  background: repeating-linear-gradient(#7b8fb4 0 1px, transparent 1px 3px) center / 7px 9px no-repeat, linear-gradient(90deg, #fff, #b9c9e5);
}
.editor { flex: 1; display: flex; flex-direction: column; min-width: 0; }
.stage {
  flex: 1;
  position: relative;
  min-height: 0;
  padding: 7px 0 0 204px;
  overflow: hidden;
  background: linear-gradient(#9ab6e2 0, #88a8d8 12%, #7397cd 35%, #5c86c0 55%, #517fb9 78%, #6692ce 100%);
}
.swoosh { position: absolute; left: 0; top: 0; width: 100%; height: 240px; }
.slide {
  position: relative;
  width: 1200px;
  height: 900px;
  padding: 46px 64px 0;
  background: #fff;
  color: #000;
  box-shadow: 3px 4px 5px #2f4f80;
}
.slide h2 {
  margin: 0;
  height: 58px;
  border-bottom: 3px solid #213a7e;
  font-size: 32px;
  line-height: 36px;
  font-weight: 700;
  white-space: nowrap;
}
.sp { text-decoration: underline wavy #d9362e 1px; text-underline-offset: 2px; text-decoration-skip-ink: none; }
.latin { font-family: "Liberation Sans", sans-serif; font-weight: 400; -webkit-text-stroke: 1px #000; }
h2 .latin { font-size: 29px; }
.node .latin { -webkit-text-stroke-width: 0.5px; }
.canvas { position: absolute; left: 0; top: 0; width: 100%; height: 100%; }
.node {
  position: absolute;
  display: flex;
  align-items: center;
  justify-content: center;
  width: 154px;
  height: 92px;
  padding-bottom: 4px;
  border: 1px solid #000;
  background: #fff;
  font-size: 21px;
  line-height: 24px;
  font-weight: 700;
  text-align: center;
  white-space: nowrap;
}
.grey { width: 192px; background: #dedede; }
.link { position: absolute; }
.n1 { left: 116px; top: 190px; }
.l1 { left: 272px; top: 188px; }
.n2 { left: 302px; top: 190px; }
.n3 { left: 125px; top: 519px; }
.l2 { left: 279px; top: 538px; }
.n4 { left: 314px; top: 519px; }
.l3 { left: 372px; top: 612px; }
.n5 { left: 317px; top: 640px; height: 89px; padding-bottom: 0; }
.brand {
  position: absolute;
  left: 73px;
  bottom: 18px;
  display: flex;
  align-items: center;
  gap: 14px;
  color: #1d3c80;
  font: 700 13px/18px "Noto Sans CJK KR", sans-serif;
}
.notes {
  flex: none;
  height: 58px;
  padding: 4px 11px;
  border-top: 5px solid #b5d3f8;
  background: #fff;
  color: #000;
  font-size: 17px;
  line-height: 22px;
}

/* Status bar */
.status {
  flex: none;
  display: flex;
  align-items: center;
  height: 23px;
  border-top: 1px solid #567db1;
  background: linear-gradient(#e4effd, #c2d7f5 50%, #cfe3fc);
}
.status span { display: flex; align-items: center; padding: 0 8px; border-right: 1px solid #9fbbe0; }
.status .template { font: 12px/16px "Liberation Sans", sans-serif; }
.status .lang { gap: 15px; padding-right: 28px; }

/* Taskbar */
.taskbar {
  flex: none;
  display: flex;
  height: 29px;
  border-top: 2px solid #3468c4;
  background: linear-gradient(#3f83ef, #245bd9 25%, #2157d2 85%, #1941a4);
  color: #fff;
  overflow: hidden;
}
.start {
  flex: none;
  display: flex;
  align-items: center;
  gap: 6px;
  width: 93px;
  padding-left: 11px;
  border-radius: 0 10px 10px 0;
  background: linear-gradient(#62b15d, #3b943b 25%, #338e35 80%, #246c26);
  box-shadow: inset -3px 0 4px #216423;
  font-size: 18px;
  text-shadow: 1px 1px 1px #184f1a;
}
.quick { flex: none; display: flex; align-items: center; gap: 8px; width: 102px; padding-left: 10px; }
.quick button { display: flex; }
.chev { align-self: flex-start; font-size: 15px; }
.task {
  flex: 0 0 147px;
  display: flex;
  align-items: center;
  gap: 4px;
  min-width: 0;
  margin: 1px 3px 3px 0;
  padding: 0 4px 0 9px;
  border-radius: 2px;
  background: linear-gradient(#5c9bfa, #3c80f2 20%, #3576ec);
}
.task.active { background: #1c4fb0; box-shadow: inset 1px 1px 2px #0d2f78; }
.task b { font-weight: 500; }
.task b + span { font-size: 12px; }
.task .caret { margin-left: auto; }
```
